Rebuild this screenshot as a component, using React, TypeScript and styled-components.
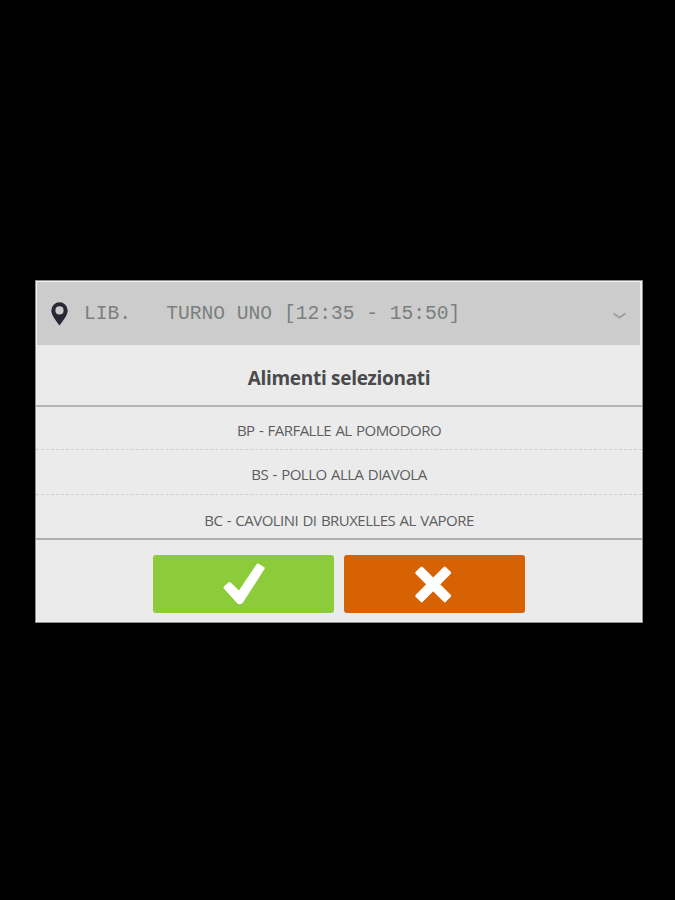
import React from "react";
import styled, { createGlobalStyle } from "styled-components";

const GlobalStyle = createGlobalStyle`
  * { box-sizing: border-box; }
  body { margin: 0; background: #000; }
`;

const Backdrop = styled.main`
  min-height: 900px;
  padding: 280px 32px 0 35px;
  background: #000;
`;

const Dialog = styled.section`
  width: 608px;
  height: 343px;
  display: flex;
  flex-direction: column;
  border: 1px solid #8c8c8c;
  background: #ebebeb;
  box-shadow: inset 0 0 0 1px #f3f3f3;
  font-family: "Open Sans", "Noto Sans", sans-serif;
`;

const ShiftSelect = styled.header`
  height: 63px;
  margin: 1px 2px 0 1px;
  padding: 1px 13px 0 14px;
  display: flex;
  align-items: center;
  background: #cccccc;
`;

const PinIcon = styled.svg`
  width: 17px;
  height: 24px;
  flex: none;
`;

const ShiftLabel = styled.span`
  flex: 1;
  margin-left: 16px;
  font: 19.6px/24px "Liberation Mono", monospace;
  white-space: pre;
  color: #7b7f7e;
`;

const ChevronIcon = styled.svg`
  width: 15px;
  height: 8px;
  flex: none;
  margin-top: 4px;
`;

const Title = styled.h1`
  height: 62px;
  margin: 0;
  padding-top: 5px;
  display: flex;
  align-items: center;
  justify-content: center;
  border-bottom: 2px solid #b3b3b3;
  font-size: 19px;
  font-weight: 700;
  letter-spacing: -0.3px;
  color: #484a4c;
`;

const FoodList = styled.ul`
  margin: 0;
  padding: 0;
  list-style: none;
`;

const FoodRow = styled.li<{ $height: number; $last?: boolean }>`
  height: ${(p) => p.$height}px;
  padding-top: ${(p) => (p.$last ? 6 : 3)}px;
  display: flex;
  align-items: center;
  justify-content: center;
  border-bottom: ${(p) => (p.$last ? "2px solid #b0b0b0" : "1px dashed #cfcfcf")};
  font-size: 15px;
  letter-spacing: -0.53px;
  word-spacing: 1px;
  color: #5c5e60;
`;

const Actions = styled.footer`
  padding-top: 15px;
  display: flex;
  justify-content: center;
  gap: 10px;
`;

const ActionButton = styled.button<{ $color: string }>`
  width: 181px;
  height: 58px;
  padding: 2px 0 0;
  display: flex;
  align-items: center;
  justify-content: center;
  border: 0;
  border-radius: 3px;
  background: ${(p) => p.$color};
`;

const ActionIcon = styled.svg`
  width: 44px;
  height: 44px;
`;

const foods = [
  { name: "BP - FARFALLE AL POMODORO", height: 43 },
  { name: "BS - POLLO ALLA DIAVOLA", height: 45 },
  { name: "BC - CAVOLINI DI BRUXELLES AL VAPORE", height: 45 },
];

export default function App() {
  return (
    <>
      <GlobalStyle />
      <Backdrop>
        <Dialog role="dialog">
          <ShiftSelect>
            <PinIcon viewBox="0 0 17 24">
              <path
                fill="#292936"
                fillRule="evenodd"
                d="M8.5 0.3A8.2 8.2 0 0 0 .3 8.5C.3 13 4.5 18 8.5 23.6 12.5 18 16.7 13 16.7 8.5A8.2 8.2 0 0 0 8.5.3ZM8.5 4.3A4.1 4.1 0 1 1 8.5 12.5 4.1 4.1 0 0 1 8.5 4.3Z"
              />
            </PinIcon>
            <ShiftLabel>{"LIB.   TURNO UNO [12:35 - 15:50]"}</ShiftLabel>
            <ChevronIcon viewBox="0 0 15 8">
              <path d="M1.5 1.5 7.5 5.6 13.5 1.5" fill="none" stroke="#a0a0a0" strokeWidth="2" />
            </ChevronIcon>
          </ShiftSelect>
          <Title>Alimenti selezionati</Title>
          <FoodList>
            {foods.map((food, i) => (
              <FoodRow key={food.name} $height={food.height} $last={i === foods.length - 1}>
                {food.name}
              </FoodRow>
            ))}
          </FoodList>
          <Actions>
            <ActionButton $color="#8ccb39" aria-label="Conferma">
              <ActionIcon viewBox="0 0 44 44">
                <path
                  fill="#fff"
                  stroke="#fff"
                  strokeWidth="3"
                  strokeLinejoin="round"
                  d="M3 24.5 7.7 20.5 17.2 29.8 35.8 2 41.2 5.3 19.9 38.5Q17.9 40.8 15.8 38.8Z"
                />
              </ActionIcon>
            </ActionButton>
            <ActionButton $color="#d66203" aria-label="Annulla">
              <ActionIcon viewBox="0 0 44 44">
                <path
                  fill="#fff"
                  stroke="#fff"
                  strokeWidth="3"
                  strokeLinejoin="round"
                  d="M8.7 5 20.2 16.5 31.7 5 36.6 9.9 25.1 21.4 36.6 32.9 31.7 37.8 20.2 26.3 8.7 37.8 3.8 32.9 15.3 21.4 3.8 9.9Z"
                />
              </ActionIcon>
            </ActionButton>
          </Actions>
        </Dialog>
      </Backdrop>
    </>
  );
}
